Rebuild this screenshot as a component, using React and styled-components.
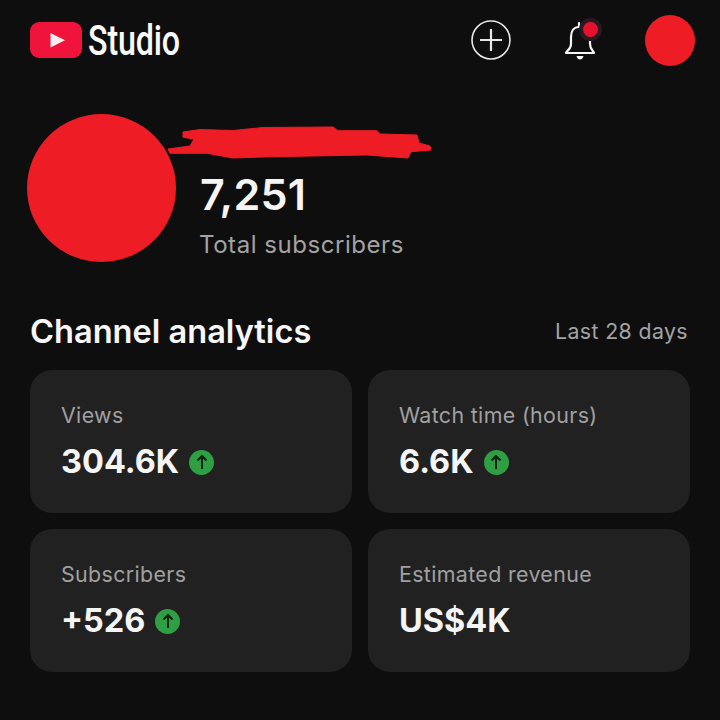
import React from 'react';
import styled, { createGlobalStyle } from 'styled-components';

const GlobalStyle = createGlobalStyle`
  html, body {
    margin: 0;
    padding: 0;
    background: #0e0e0f;
  }
  body {
    font-family: Inter, "Liberation Sans", sans-serif;
  }
`;

const Page = styled.div`
  width: 720px;
  height: 720px;
  overflow: hidden;
  box-sizing: border-box;
  padding: 14px 25px 0 30px;
  background: #0e0e0f;
  color: #f6f6f6;
`;

const Header = styled.header`
  display: flex;
  align-items: center;
  height: 52px;
`;

const Brand = styled.div`
  display: flex;
  align-items: center;
  gap: 6px;
  flex: 1;
`;

const Wordmark = styled.span`
  display: inline-block;
  width: 90px;
  font-family: "Roboto", "Liberation Sans", sans-serif;
  font-size: 43px;
  line-height: 52px;
  font-weight: 500;
  letter-spacing: -0.2px;
  color: #fafafa;
  transform: scaleX(0.75);
  transform-origin: left center;
  white-space: nowrap;
`;

const Actions = styled.div`
  display: flex;
  align-items: center;
`;

const IconSlot = styled.div`
  position: relative;
  display: flex;
  width: ${p => p.$w}px;
  margin-right: ${p => p.$mr}px;
`;

const Dot = styled.span`
  position: absolute;
  top: -1px;
  left: 15px;
  width: 15px;
  height: 15px;
  border-radius: 50%;
  border: 4px solid #2a1a20;
  background: #e8112d;
`;

const SmallAvatar = styled.div`
  width: 50px;
  height: 51px;
  border-radius: 50%;
  background: #ee1c25;
`;

const Profile = styled.section`
  display: flex;
  align-items: flex-start;
  gap: 24px;
  margin: 48px 0 0 -3px;
`;

const BigAvatar = styled.div`
  width: 149px;
  height: 148px;
  flex: none;
  border-radius: 50%;
  background: #ee1c25;
`;

const ProfileText = styled.div`
  display: flex;
  flex-direction: column;
  position: relative;
  padding-top: 55px;
`;

const Scribble = styled.svg`
  position: absolute;
  left: -32px;
  top: 12px;
`;

const SubCount = styled.div`
  font-size: 43px;
  line-height: 50px;
  font-weight: 600;
  letter-spacing: 0.2px;
  color: #f5f5f5;
`;

const SubLabel = styled.div`
  margin: 12px 0 0 -1px;
  font-size: 24px;
  line-height: 28px;
  letter-spacing: 0.55px;
  color: #a3a3a3;
`;

const SectionHead = styled.div`
  display: flex;
  align-items: center;
  justify-content: space-between;
  margin-top: 49px;
  height: 40px;
  padding-right: 7px;
`;

const Title = styled.h2`
  margin: 0;
  font-size: 32.6px;
  line-height: 40px;
  font-weight: 600;
  color: #f7f7f7;
`;

const Range = styled.span`
  font-size: 21.3px;
  letter-spacing: 0.4px;
  color: #a3a3a3;
`;

const Grid = styled.div`
  display: grid;
  grid-template-columns: 322px 322px;
  grid-auto-rows: 143px;
  gap: 16px;
  margin-top: 19px;
`;

const Card = styled.div`
  box-sizing: border-box;
  padding: 31px 31px 0;
  border-radius: 22px;
  background: #212121;
`;

const CardLabel = styled.div`
  font-size: 21.4px;
  line-height: 28px;
  letter-spacing: 0.35px;
  color: #a0a0a0;
`;

const CardValue = styled.div`
  display: flex;
  align-items: center;
  gap: 10px;
  margin-top: 13px;
  font-size: 32.5px;
  line-height: 40px;
  font-weight: 700;
  color: #f5f5f5;
`;

const TrendBadge = styled.span`
  display: flex;
  align-items: center;
  justify-content: center;
  width: 25px;
  height: 25px;
  border-radius: 50%;
  background: #2ea043;
`;

const YoutubeMark = () => (
  <svg width="52" height="36" viewBox="0 0 52 36">
    <rect width="52" height="36" rx="9" fill="#f0143c" />
    <path d="M20.5 11 L35 18.2 L20.5 25.5 Z" fill="#fbeef0" />
  </svg>
);

const PlusIcon = () => (
  <svg width="40" height="40" viewBox="0 0 40 40" fill="none" stroke="#e8e8e8">
    <circle cx="20" cy="20" r="19" strokeWidth="1.6" />
    <path d="M20 9 V31 M9 20 H31" strokeWidth="2.2" />
  </svg>
);

const BellIcon = () => (
  <svg width="32" height="42" viewBox="0 0 32 42" fill="none" stroke="#f5f5f5" strokeWidth="2.2" strokeLinejoin="round">
    <path d="M2 34 H30 C30 32 26 31 26 25 V18 C26 12 21 8 15 8 C10 8 7 12 7 18 V25 C7 31 2 32 2 34 Z" />
    <path d="M15 8 V4" strokeLinecap="round" />
    <path d="M12.5 37 H19.5 C19 39.5 17.5 40.5 16 40.5 C14.5 40.5 13 39.5 12.5 37 Z" fill="#f5f5f5" stroke="none" />
  </svg>
);

const UpArrow = () => (
  <svg width="14" height="16" viewBox="0 0 14 16" fill="none" stroke="#0f2414" strokeWidth="2">
    <path d="M7 15 V2 M2.5 6.5 L7 2 L11.5 6.5" />
  </svg>
);

// hand-drawn marker stroke over the channel name
const RedactedStroke = () => (
  <Scribble width="264" height="34" viewBox="0 0 264 34">
    <path
      fill="#ee1c25"
      stroke="#ee1c25"
      strokeLinejoin="round"
      d="M15 6 L32 3.5 L65 4.5 L95 1.5 L165 1 L170 4.7 L209 4.7 L212 8 L249 9 L251 17 L262 20 L263 24 L243 25.7 L240 32 L199 29 L105 30.7 L65 32 L39 27.3 L2 27.3 L0 23 L22 20 L26 13 L15 11.3 Z"
    />
  </Scribble>
);

const stats = [
  { label: 'Views', value: '304.6K', up: true },
  { label: 'Watch time (hours)', value: '6.6K', up: true },
  { label: 'Subscribers', value: '+526', up: true },
  { label: 'Estimated revenue', value: 'US$4K', up: false },
];

export default function App() {
  return (
    <Page>
      <GlobalStyle />
      <Header>
        <Brand>
          <YoutubeMark />
          <Wordmark>Studio</Wordmark>
        </Brand>
        <Actions>
          <IconSlot $w={40} $mr={53}>
            <PlusIcon />
          </IconSlot>
          <IconSlot $w={32} $mr={49}>
            <BellIcon />
            <Dot />
          </IconSlot>
          <SmallAvatar />
        </Actions>
      </Header>

      <Profile>
        <BigAvatar />
        <ProfileText>
          <RedactedStroke />
          <SubCount>7,251</SubCount>
          <SubLabel>Total subscribers</SubLabel>
        </ProfileText>
      </Profile>

      <SectionHead>
        <Title>Channel analytics</Title>
        <Range>Last 28 days</Range>
      </SectionHead>

      <Grid>
        {stats.map(s => (
          <Card key={s.label}>
            <CardLabel>{s.label}</CardLabel>
            <CardValue>
              {s.value}
              {s.up && (
                <TrendBadge>
                  <UpArrow />
                </TrendBadge>
              )}
            </CardValue>
          </Card>
        ))}
      </Grid>
    </Page>
  );
}
